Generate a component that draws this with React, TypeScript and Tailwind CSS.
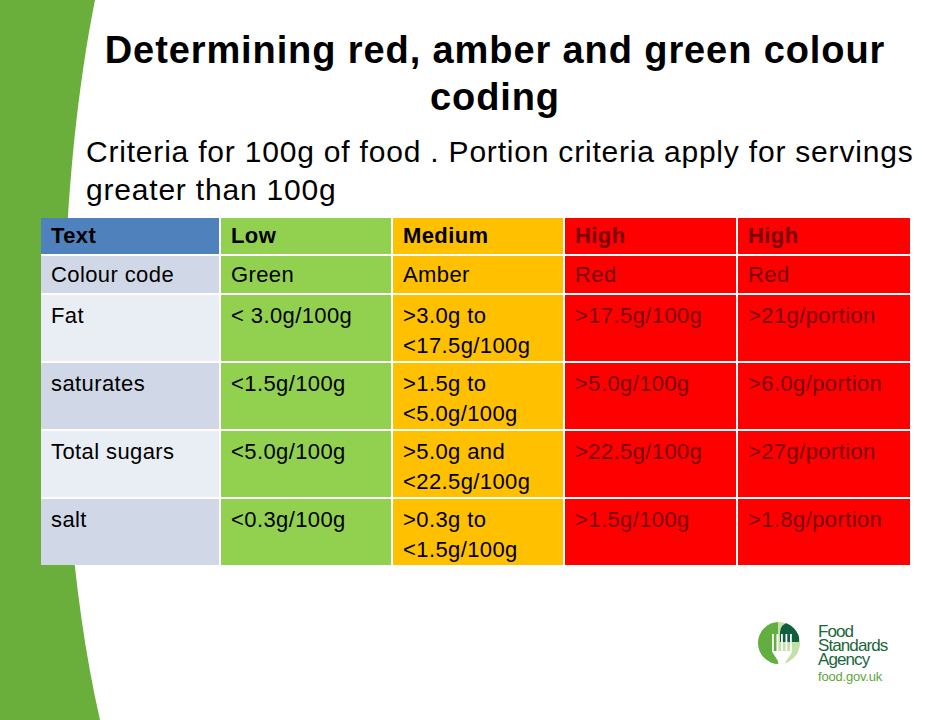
import React from 'react';

type Row = {
  label: string;
  shade: 'dark' | 'light';
  low: string;
  med: string[];
  high: string;
  portion: string;
};

const rows: Row[] = [
  { label: 'Colour code', shade: 'dark', low: 'Green', med: ['Amber'], high: 'Red', portion: 'Red' },
  { label: 'Fat', shade: 'light', low: '< 3.0g/100g', med: ['>3.0g to', '<17.5g/100g'], high: '>17.5g/100g', portion: '>21g/portion' },
  { label: 'saturates', shade: 'dark', low: '<1.5g/100g', med: ['>1.5g to', '<5.0g/100g'], high: '>5.0g/100g', portion: '>6.0g/portion' },
  { label: 'Total sugars', shade: 'light', low: '<5.0g/100g', med: ['>5.0g and', '<22.5g/100g'], high: '>22.5g/100g', portion: '>27g/portion' },
  { label: 'salt', shade: 'dark', low: '<0.3g/100g', med: ['>0.3g to', '<1.5g/100g'], high: '>1.5g/100g', portion: '>1.8g/portion' },
];

// Logo mark: green disc with a fork
function FsaMark() {
  return (
    <svg width="44" height="44" viewBox="0 0 44 44">
      <defs>
        <clipPath id="disc">
          <circle cx="22" cy="22" r="21" />
        </clipPath>
      </defs>
      <g clipPath="url(#disc)">
        <rect width="44" height="44" fill="#c3e0a9" />
        <rect width="21" height="44" fill="#63ae40" />
        <path d="M23 21 V11 A9.5 9.5 0 0 1 42 11 V21 Z" fill="#0f5e40" />
        <rect x="15" y="13" width="1.8" height="18" fill="#ffffff" />
        <rect x="19.5" y="13" width="1.8" height="18" fill="#ffffff" />
        <rect x="24" y="13" width="1.8" height="18" fill="#ffffff" />
        <rect x="28.5" y="13" width="1.8" height="18" fill="#ffffff" />
        <rect x="33" y="13" width="1.8" height="18" fill="#ffffff" />
        <path d="M15 30 H35 C34 35 30 37 27 44 H22 C21 38 17 35 15 30 Z" fill="#ffffff" />
      </g>
    </svg>
  );
}

export default function App() {
  const cell = 'pl-[10px] text-[22px] leading-[30px] tracking-[0.4px]';
  return (
    <div className="relative w-[930px] h-[720px] overflow-hidden bg-white font-['Liberation_Sans',Arial,sans-serif] text-black">
      <svg className="absolute inset-0" width="930" height="720" viewBox="0 0 930 720">
        <path d="M0 0 H95 C55 200 50 500 100 720 H0 Z" fill="#6aae3c" />
      </svg>

      <div className="relative flex flex-col">
        <h1 className="mt-[27px] ml-[80px] w-[830px] text-center text-[38px] leading-[47px] font-bold tracking-[0.9px]">
          Determining red, amber and green colour
          <br />
          coding
        </h1>

        <p className="mt-[12px] ml-[86px] text-[30px] leading-[38px] tracking-[0.8px]">
          Criteria for 100g of food . Portion criteria apply for servings
          <br />
          greater than 100g
        </p>

        <div className="mt-[9px] ml-[41px] grid w-max grid-cols-[178px_170px_170px_171px_172px] grid-rows-[36px_37px_66px_66px_66px_66px] gap-[2px] bg-white">
          <div className={`${cell} pt-[3px] font-bold bg-[#4f81bd]`}>Text</div>
          <div className={`${cell} pt-[3px] font-bold bg-[#92d050]`}>Low</div>
          <div className={`${cell} pt-[3px] font-bold bg-[#ffc000]`}>Medium</div>
          <div className={`${cell} pt-[3px] font-bold bg-[#ff0000] text-[#7a0000]`}>High</div>
          <div className={`${cell} pt-[3px] font-bold bg-[#ff0000] text-[#7a0000]`}>High</div>

          {rows.map((r, i) => {
            const pad = i === 0 ? 'pt-[4px]' : 'pt-[6px]';
            return (
              <React.Fragment key={r.label}>
                <div className={`${cell} ${pad} ${r.shade === 'dark' ? 'bg-[#d0d8e8]' : 'bg-[#e9edf4]'}`}>{r.label}</div>
                <div className={`${cell} ${pad} bg-[#92d050]`}>{r.low}</div>
                <div className={`${cell} ${pad} bg-[#ffc000]`}>
                  {r.med.map((m) => (
                    <div key={m}>{m}</div>
                  ))}
                </div>
                <div className={`${cell} ${pad} bg-[#ff0000] text-[#7a0000]`}>{r.high}</div>
                <div className={`${cell} ${pad} bg-[#ff0000] text-[#7a0000]`}>{r.portion}</div>
              </React.Fragment>
            );
          })}
        </div>

        <div className="mt-[54px] ml-[757px] flex items-start gap-[17px]">
          <div className="mt-[2px]">
            <FsaMark />
          </div>
          <div className="flex flex-col pt-[6px]">
            <div className="text-[17px] leading-[14px] tracking-[-0.9px] text-[#1a6639]">
              <div>Food</div>
              <div>Standards</div>
              <div>Agency</div>
            </div>
            <div className="mt-[2px] text-[13px] leading-[16px] tracking-[-0.2px] text-[#5ea63a]">food.gov.uk</div>
          </div>
        </div>
      </div>
    </div>
  );
}
